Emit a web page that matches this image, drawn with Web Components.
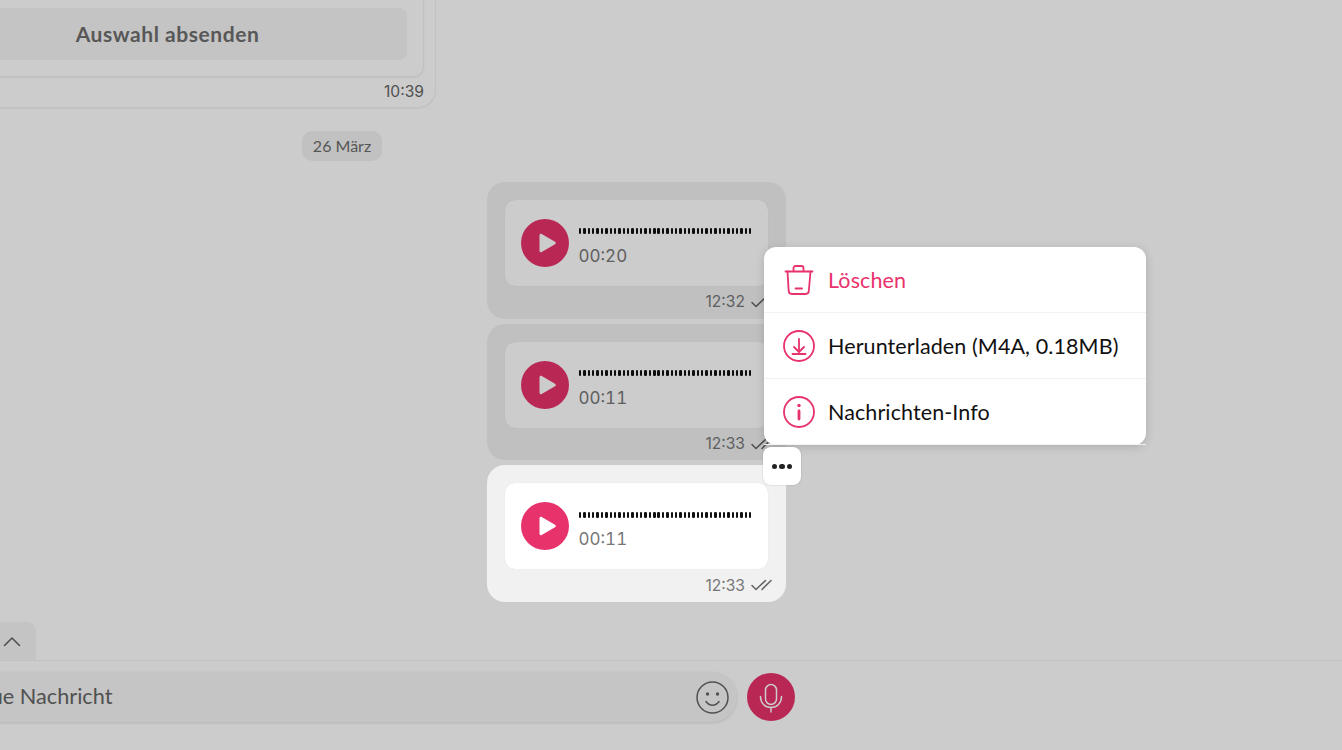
<!DOCTYPE html>
<html lang="de"><head><meta charset="utf-8"><title>Chat</title>
<style>
html,body{margin:0;padding:0;background:#fff}
body{font-family:Lato,"Noto Sans",sans-serif;color:#000}
</style></head><body>
<chat-shell>
  <choice-bubble></choice-bubble>
  <date-chip>26 März</date-chip>
  <audio-bubble duration="00:20" time="12:32" checks="1"></audio-bubble>
  <audio-bubble duration="00:11" time="12:33" checks="2"></audio-bubble>
  <audio-bubble duration="00:11" time="12:33" checks="2" active>
    <message-menu></message-menu>
  </audio-bubble>
  <chat-composer slot="composer"></chat-composer>
</chat-shell>
<script>
const PINK='#e8326b';
function def(name,html){
  customElements.define(name,class extends HTMLElement{
    constructor(){super();this.attachShadow({mode:'open'});
      this.shadowRoot.innerHTML=typeof html==='function'?html(this):html;}
  });
}
def('chat-shell',`<style>
:host{display:flex;flex-direction:column;position:relative;width:1342px;height:750px;overflow:hidden;background:#fff}
.chat{flex:1;min-height:0;width:888px;margin-left:-102px;display:flex;flex-direction:column;justify-content:flex-end;padding-bottom:20px;box-sizing:border-box}
.scrim{position:absolute;inset:0;background:rgba(0,0,0,.2);z-index:10}
</style><div class="chat"><slot></slot></div><slot name="composer"></slot><div class="scrim"></div>`);

def('choice-bubble',`<style>
:host{display:block;width:538px;flex:none;box-sizing:border-box;border:1.5px solid #f2f2f2;border-top:0;border-radius:0 0 18px 18px;padding:0 11px 0 0;margin-bottom:23px;background:#fff;box-shadow:0 1px 1px rgba(0,0,0,.04)}
.card{border:1.5px solid #f0f0f0;border-top:0;border-radius:0 0 10px 10px;padding:8px 16px 16px 0;box-shadow:0 1px 2px rgba(0,0,0,.06)}
.btn{height:52px;border-radius:8px;background:#f5f5f5;display:flex;align-items:center;justify-content:center;font:700 21px Lato,sans-serif;letter-spacing:.55px;color:#6e6e6e;padding-left:28px}
.t{text-align:right;font:15.6px Inter,sans-serif;color:#666;line-height:30px;height:30px}
</style><div class="card"><div class="btn">Auswahl absenden</div></div><div class="t">10:39</div>`);

def('date-chip',`<style>
:host{display:block;align-self:center;flex:none;height:30px;width:80px;text-align:center;border-radius:10px;background:#f2f2f2;color:#6c6c6c;font:16px/30px Lato,sans-serif;margin-bottom:16px}
</style><slot></slot>`);

const checks=n=>n==2
 ?`<svg width="22" height="14" viewBox="0 0 22 14" fill="none" stroke="#666" stroke-width="1.6" stroke-linecap="round" stroke-linejoin="round"><path d="M2 7.500l4 4L15.500 2.500"/><path d="M12 11.500 21 2.500"/></svg>`
 :`<svg width="22" height="14" viewBox="0 0 22 14" fill="none" stroke="#666" stroke-width="1.6" stroke-linecap="round" stroke-linejoin="round"><path d="M2 7.500l4 4L15.500 2.500"/></svg>`;

def('audio-bubble',el=>{
 const bars=Array.from({length:40},()=>'<i></i>').join('');
 return `<style>
:host{display:block;flex:none;align-self:flex-end;width:299px;height:136.7px;box-sizing:border-box;padding:18px 18px 0;border-radius:18px;background:#f1f1f1;margin-top:5px}
:host([active]){position:relative;z-index:20}
.card{height:86px;box-sizing:border-box;background:#fff;border-radius:10px;box-shadow:0 0 1px rgba(0,0,0,.14);display:flex;align-items:center;gap:10px;padding:0 16px}
.play{width:48px;height:48px;flex:none;display:block}
.info{flex:1;min-width:0;display:flex;flex-direction:column;gap:11px;margin-top:10px}
.wave{display:flex;justify-content:space-between;align-items:center;height:5px}
.wave i{display:block;width:2.4px;height:6px;border-radius:1.2px;background:#111}
.dur{font:17px/22px Inter,sans-serif;font-variant-numeric:tabular-nums;color:#777;margin-left:-.5px}
.meta{display:flex;justify-content:flex-end;align-items:center;gap:5px;height:32px;margin-right:-4px;font:15.6px Inter,sans-serif;color:#777}
.meta svg{display:block}
</style>
<div class="card">
<svg class="play" viewBox="0 0 48 48"><circle cx="24" cy="24" r="24" fill="${PINK}"/><path d="M18.500 16.200c0-1.200 1.200-1.900 2.200-1.300l13.300 7.800c1 .6 1 2 0 2.600l-13.300 7.800c-1 .6-2.200-.1-2.200-1.300z" fill="#fff"/></svg>
<div class="info"><div class="wave">${bars}</div><div class="dur">${el.getAttribute('duration')}</div></div>
</div>
<div class="meta"><span>${el.getAttribute('time')}</span>${checks(+el.getAttribute('checks'))}</div>
<slot></slot>`});

def('message-menu',`<style>
:host{display:block;position:absolute;left:277px;top:-218px;width:382px;height:198px;background:#fff;border-radius:12px;box-shadow:0 2px 10px rgba(0,0,0,.15);font:21.5px Lato,sans-serif;letter-spacing:.1px;color:#111}
.row{display:flex;align-items:center;gap:13px;height:66px;box-sizing:border-box;padding:0 19px;border-bottom:1px solid #f2f2f2}
.row:last-of-type{border-bottom:0}
.row svg{flex:none;display:block}
.del{color:${PINK}}
.dots{position:absolute;left:-1px;top:200px;width:38px;height:38px;background:#fff;border-radius:8px;box-shadow:0 0 2px rgba(0,0,0,.2);display:flex;align-items:center;justify-content:center;gap:1.8px}
.dots i{width:5.500px;height:5.500px;border-radius:50%;background:#222}
</style>
<div class="row del"><svg width="32" height="32" viewBox="0 0 32 32" fill="none" stroke="${PINK}" stroke-width="1.800" stroke-linecap="round" stroke-linejoin="round"><path d="M2.500 7.500H29.500"/><path d="M10.500 7V4a2 2 0 0 1 2-2h6a2 2 0 0 1 2 2v3"/><path d="M4.500 7.500 5.700 27a3.200 3.200 0 0 0 3.200 3h13.700a3.200 3.200 0 0 0 3.200-3L27.500 7.500"/><path d="M12.500 24.500h6.500"/></svg><span>Löschen</span></div>
<div class="row"><svg width="32" height="32" viewBox="0 0 32 32" fill="none" stroke="${PINK}" stroke-width="1.800" stroke-linecap="round" stroke-linejoin="round"><circle cx="16" cy="16" r="15"/><path d="M16 9v12.500"/><path d="M11 17l5 5 5-5"/><path d="M9.500 24h13"/></svg><span>Herunterladen (M4A, 0.18MB)</span></div>
<div class="row"><svg width="32" height="32" viewBox="0 0 32 32" fill="none" stroke="${PINK}" stroke-width="1.800" stroke-linecap="round"><circle cx="16" cy="16" r="15"/><path d="M16 15v8" stroke-width="2.800"/><circle cx="16" cy="9.500" r="1.700" fill="${PINK}" stroke="none"/></svg><span>Nachrichten-Info</span></div>
<div class="dots"><i></i><i></i><i></i></div>`);

def('chat-composer',`<style>
:host{display:block;flex:none;width:1342px}
.tab{height:38px;margin-left:-20px;background:#f5f5f5;border-radius:0 9px 0 0;display:flex;align-items:center;justify-content:flex-end;padding-right:15px;width:41px}
.bar{height:90px;box-sizing:border-box;border-top:1px solid #f0f0f0;display:flex;align-items:flex-start;padding-top:11px;gap:10px}
.input{width:777px;margin-left:-40px;flex:none;height:50px;box-sizing:border-box;border-radius:0 25px 25px 0;background:#f7f7f7;box-shadow:0 1px 3px rgba(0,0,0,.12);display:flex;align-items:center;justify-content:space-between;padding:0 8px 0 0;font:21.7px Lato,sans-serif;color:#666}
.ph{margin:-2px 0 0 3px}
.mic{flex:none;display:block;margin-top:1px}
svg{display:block}
</style>
<div class="tab"><svg width="18" height="11" viewBox="0 0 18 11" fill="none" stroke="#666" stroke-width="1.600" stroke-linecap="round" stroke-linejoin="round"><path d="M1.500 9.500 9 2l7.500 7.500"/></svg></div>
<div class="bar">
<div class="input"><span class="ph">Neue Nachricht</span>
<svg width="33" height="33" viewBox="0 0 33 33" fill="none" stroke="#666" stroke-width="1.500" stroke-linecap="round"><circle cx="16.500" cy="16.500" r="15.500"/><circle cx="11.500" cy="13" r="1.700" fill="#666" stroke="none"/><circle cx="21.500" cy="13" r="1.700" fill="#666" stroke="none"/><path d="M10 20.500c2 3 4.200 3.800 6.500 3.800s4.500-.8 6.500-3.800"/></svg></div>
<svg class="mic" width="48" height="48" viewBox="0 0 48 48" fill="none" stroke="#fff" stroke-width="1.500" stroke-linecap="round"><circle cx="24" cy="24" r="24" fill="${PINK}" stroke="none"/><rect x="18.500" y="11.500" width="11" height="20" rx="5.500"/><path d="M13.500 23.500c0 6.500 4.500 11 10.500 11s10.500-4.500 10.500-11"/><path d="M24 34.500v4.500"/></svg>
</div>`);
</script>
</body></html>
